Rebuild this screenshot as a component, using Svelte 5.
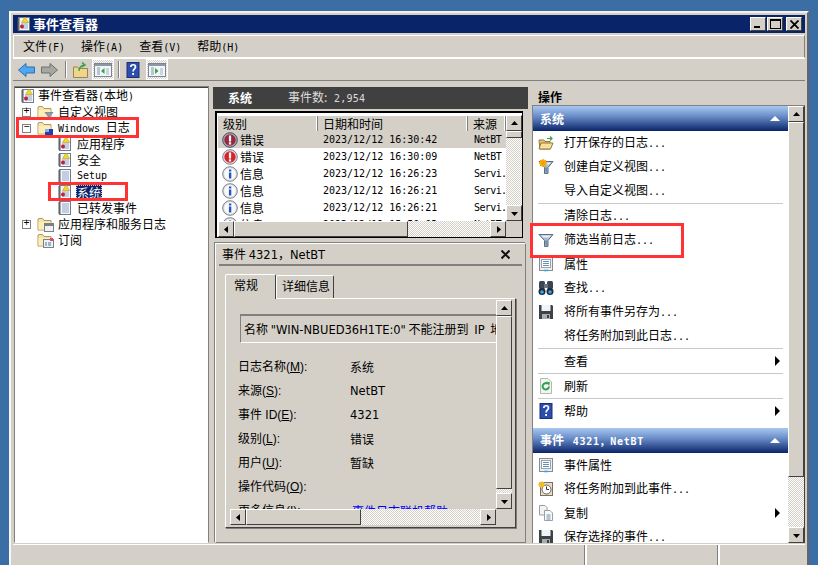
<script>
	const tree = [
		{ label: '应用程序', icon: 'log' },
		{ label: '安全', icon: 'log' },
		{ label: 'Setup', icon: 'plain', mono: true },
		{ label: '系统', icon: 'log', selected: true },
		{ label: '已转发事件', icon: 'plain' }
	];

	const events = [
		{ kind: 'error', level: '错误', time: '2023/12/12 16:30:42', source: 'NetBT', selected: true },
		{ kind: 'error', level: '错误', time: '2023/12/12 16:30:09', source: 'NetBT' },
		{ kind: 'info', level: '信息', time: '2023/12/12 16:26:23', source: 'Servi.' },
		{ kind: 'info', level: '信息', time: '2023/12/12 16:26:21', source: 'Servi.' },
		{ kind: 'info', level: '信息', time: '2023/12/12 16:26:21', source: 'Servi.' },
		{ kind: 'info', level: '信息', time: '2023/12/12 15:50:03', source: 'NetBT' }
	];

	const fields = [
		{ name: '日志名称', key: 'M', value: '系统' },
		{ name: '来源', key: 'S', value: 'NetBT', lat: true },
		{ name: '事件 ID', key: 'E', value: '4321', lat: true },
		{ name: '级别', key: 'L', value: '错误' },
		{ name: '用户', key: 'U', value: '暂缺' },
		{ name: '操作代码', key: 'O', value: '' },
		{ name: '更多信息', key: 'I', value: '事件日志联机帮助', link: true }
	];

	const systemActions = [
		{ label: '打开保存的日志', dots: true, icon: 'open' },
		{ label: '创建自定义视图', dots: true, icon: 'newfilter' },
		{ label: '导入自定义视图', dots: true },
		{ sep: true },
		{ label: '清除日志', dots: true },
		{ label: '筛选当前日志', dots: true, icon: 'filter' },
		{ label: '属性', icon: 'props' },
		{ label: '查找', dots: true, icon: 'find' },
		{ label: '将所有事件另存为', dots: true, icon: 'save' },
		{ label: '将任务附加到此日志', dots: true },
		{ sep: true },
		{ label: '查看', more: true },
		{ sep: true },
		{ label: '刷新', icon: 'refresh' },
		{ sep: true },
		{ label: '帮助', icon: 'help', more: true }
	];

	const eventActions = [
		{ label: '事件属性', icon: 'props' },
		{ label: '将任务附加到此事件', dots: true, icon: 'task' },
		{ label: '复制', icon: 'copy', more: true },
		{ label: '保存选择的事件', dots: true, icon: 'save' }
	];
</script>

{#snippet arrow(dir)}
	<svg class="arrow" width="7" height="7" viewBox="0 0 7 7">
		{#if dir === 'up'}<path d="M3.5 1 7 5H0z" />
		{:else if dir === 'down'}<path d="M0 2h7L3.5 6z" />
		{:else if dir === 'left'}<path d="M5 0v7L1 3.5z" />
		{:else}<path d="M2 0v7l4-3.5z" />{/if}
	</svg>
{/snippet}

{#snippet vbar(thumb)}
	<div class="vbar">
		<div class="sbtn">{@render arrow('up')}</div>
		<div class="thumb" style="flex: 0 0 {thumb}px"></div>
		<div class="track"></div>
		<div class="sbtn">{@render arrow('down')}</div>
	</div>
{/snippet}

{#snippet hbar(thumb)}
	<div class="hbar">
		<div class="sbtn">{@render arrow('left')}</div>
		<div class="thumb" style="flex: 0 0 {thumb}px"></div>
		<div class="track"></div>
		<div class="sbtn">{@render arrow('right')}</div>
	</div>
{/snippet}

{#snippet icon(name)}
	<svg class="ico" width="16" height="16" viewBox="0 0 16 16">
		{#if name === 'log'}
			<rect x="2.5" y="1.5" width="11" height="13" fill="#f4f7fb" stroke="#6d7b8e" />
			<path d="M5 8h7M5 10h7M5 12h7" stroke="#8fa6c4" />
			<path d="M1 3h3M1 5h3M1 7h3M1 9h3M1 11h3M1 13h3" stroke="#555" />
			<path d="M9 1l3.500 5.500h-7z" fill="#f7d828" stroke="#b89a10" stroke-width=".6" />
			<circle cx="6" cy="10.500" r="2" fill="#c4203a" />
		{:else if name === 'plain'}
			<rect x="2.5" y="1.500" width="11" height="13" fill="#f4f7fb" stroke="#6d7b8e" />
			<path d="M5 4h7M5 6h7M5 8h7M5 10h7M5 12h7" stroke="#8fa6c4" />
			<path d="M1 3h3M1 5h3M1 7h3M1 9h3M1 11h3M1 13h3" stroke="#555" />
		{:else if name === 'open'}
			<path d="M1 5h5l1 1.500h5V14H2z" fill="#e8c46c" stroke="#94783a" />
			<path d="M1 14l2-6h12l-2.500 6z" fill="#f6e0a0" stroke="#94783a" />
			<path d="M9 3.500h5M12 1.500l2 2-2 2" stroke="#3da14a" fill="none" stroke-width="1.200" />
		{:else if name === 'filter' || name === 'newfilter'}
			<path d="M1 2.500h14L10 8.500v6H6.500V8.500z" fill="#a9bdd2" stroke="#5d6b7c" />
			<path d="M6.500 8.500h3.500v6H8z" fill="#7890a8" />
			<path d="M3 3.500h10l-2 2H5z" fill="#e6eef6" />
			{#if name === 'newfilter'}
				<circle cx="5" cy="4" r="3.500" fill="#fbb615" />
				<path d="M5 0v8M1 4h8M2 1l6 6M8 1L2 7" stroke="#f39a05" />
			{/if}
		{:else if name === 'props'}
			<rect x="1.500" y="1.500" width="13" height="13" fill="#eceef0" stroke="#858c94" />
			<rect x="3.500" y="3.500" width="9" height="8" fill="#fff" stroke="#9aa2aa" />
			<path d="M5 5.500h6M5 7.500h6M5 9.500h6" stroke="#6a8fb4" />
			<path d="M6 14.500h4" stroke="#3aa0d8" stroke-width="1.500" />
		{:else if name === 'find'}
			<rect x="1" y="1" width="6" height="8" rx="1.500" fill="#3c4550" />
			<rect x="9" y="1" width="6" height="8" rx="1.500" fill="#3c4550" />
			<rect x="6" y="4" width="4" height="4" fill="#6c7682" />
			<circle cx="4" cy="11.500" r="3.500" fill="#1f2a36" />
			<circle cx="12" cy="11.500" r="3.500" fill="#1f2a36" />
			<circle cx="4" cy="12" r="1.800" fill="#38a8ee" />
			<circle cx="12" cy="12" r="1.800" fill="#38a8ee" />
		{:else if name === 'save'}
			<path d="M1 1h13l1 1v13H1z" fill="#3d4249" />
			<rect x="3.500" y="1" width="9" height="6" fill="#f2f3f5" />
			<rect x="4" y="10" width="8" height="5" fill="#a8adb3" />
			<rect x="9" y="11" width="2" height="3" fill="#3d4249" />
		{:else if name === 'refresh'}
			<path d="M2.500.5H10l3.500 3.500v11.500h-11z" fill="#f3f4f3" stroke="#b4b8b4" />
			<path d="M11 8.500a3.200 3.200 0 1 1-1.200-2.700" fill="none" stroke="#28a548" stroke-width="2" />
			<path d="M8.500 3.500l3.500 1-1 3.500z" fill="#28a548" />
		{:else if name === 'help'}
			<rect x="2" y="0.500" width="12" height="15" fill="#2a4fb0" stroke="#1b2f72" />
			<path d="M5.800 5c0-3 4.700-3 4.700 0 0 2-2.400 2-2.400 4.500" fill="none" stroke="#fff" stroke-width="1.700" />
			<rect x="7.200" y="11" width="1.800" height="2" fill="#fff" />
		{:else if name === 'task'}
			<rect x="2.500" y="1.500" width="12" height="13" fill="#e5dccb" stroke="#7d6f5b" />
			<circle cx="8.500" cy="8.500" r="4.500" fill="#fff" stroke="#6b6252" />
			<path d="M8.500 5.500v3h2.500" fill="none" stroke="#333" />
			<circle cx="3.500" cy="3.500" r="3" fill="#f7b92c" />
		{:else if name === 'copy'}
			<path d="M1.500.5H7l2 2V10H1.500z" fill="#f2f3f5" stroke="#9a9fa6" />
			<path d="M6.500 5.500H12l2.500 2.500v7.500h-8z" fill="#f8f9fa" stroke="#9a9fa6" />
			<path d="M8.500 10h4M8.500 12h4M8.500 14h4" stroke="#6a8fb4" />
		{/if}
	</svg>
{/snippet}

{#snippet folder(badge)}
	<svg class="ico" width="17" height="16" viewBox="0 0 17 16">
		<path d="M1 3V14h13V4.500H7L5.500 2.500H2z" fill="#f7e3a6" stroke="#b39a5e" />
		<path d="M1.500 6h12v7.500h-12z" fill="#fbeebb" />
		{#if badge === 'filter'}
			<path d="M8 8.500h8l-3 3.500v3h-2v-3z" fill="#8ea2b6" stroke="#5b6b7c" stroke-width=".6" />
		{:else if badge === 'windows'}
			<rect x="8" y="9" width="8" height="6.500" fill="#1e3fae" />
			<rect x="8" y="9" width="4" height="3" fill="#8ab0ef" />
		{:else if badge === 'app'}
			<rect x="7.500" y="7.500" width="9" height="8" fill="#f1f2f4" stroke="#7b8087" />
			<rect x="8" y="8" width="8" height="2" fill="#7b8087" />
		{:else if badge === 'sub'}
			<rect x="6.500" y="7.500" width="10" height="8" fill="#eef1f6" stroke="#7b8087" />
			<rect x="13" y="6" width="3" height="3" fill="#e8485a" />
			<path d="M8 11h2M11 11h3M8 13h2M11 13h3" stroke="#4a78b0" />
		{/if}
	</svg>
{/snippet}

{#snippet levelIcon(kind, dim)}
	<svg class="lvl" width="16" height="16" viewBox="0 0 16 16">
		<circle cx="8" cy="8" r="7.300" fill={dim ? '#a9abb8' : '#dfe1e6'} stroke={dim ? '#4a4e68' : '#7d8088'} />
		{#if kind === 'error'}
			<circle cx="8" cy="8" r="5.700" fill={dim ? '#98283f' : '#d9242c'} />
			<rect x="6.900" y="3.500" width="2.200" height="6" fill="#fff" />
			<rect x="6.900" y="10.300" width="2.200" height="2.200" fill="#fff" />
		{:else}
			<circle cx="8" cy="8" r="5.700" fill="#fbfbfd" />
			<rect x="6.900" y="6.500" width="2.400" height="6" fill="#2456b8" />
			<rect x="6.900" y="3.500" width="2.400" height="2" fill="#2456b8" />
		{/if}
	</svg>
{/snippet}

{#snippet toolIcon(mirror)}
	<svg width="18" height="16" viewBox="0 0 18 16">
		<rect x="0.500" y="1.500" width="17" height="13" fill="#f3f5f7" stroke="#7d858e" />
		<rect x="1" y="2" width="16" height="2" fill="#8d98a4" />
		<path d="M3 6h3M3 8h3M3 10h3M3 12h3" stroke="#7a96b8" />
		<rect x="12" y="6" width="3" height="7" fill="#c9d5e3" />
		{#if mirror}<path d="M7 6v6l3.500-3z" fill="#2ea84a" />{:else}<path d="M10.500 6v6L7 9z" fill="#2ea84a" />{/if}
	</svg>
{/snippet}

{#snippet actionList(items)}
	{#each items as item}
		{#if item.sep}
			<div class="act-sep"></div>
		{:else}
			<div class="act">
				<span class="act-ico">{#if item.icon}{@render icon(item.icon)}{/if}</span>
				<span class="act-label">{item.label}{#if item.dots}<span class="mono">...</span>{/if}</span>
				{#if item.more}<span class="more"></span>{/if}
			</div>
		{/if}
	{/each}
{/snippet}

<div class="desktop">
	<div class="window">
		<div class="titlebar">
			{@render icon('log')}
			<span class="title">事件查看器</span>
			<div class="caption">
				<button class="cap" aria-label="最小化"><i class="c-min"></i></button>
				<button class="cap" aria-label="最大化"><i class="c-max"></i></button>
				<button class="cap close" aria-label="关闭">
					<svg width="9" height="9" viewBox="0 0 9 9"><path d="M.5.500l8 8M8.500.500l-8 8" stroke="#000" stroke-width="1.800" /></svg>
				</button>
			</div>
		</div>

		<nav class="menubar">
			<span>文件<span class="mono">(F)</span></span>
			<span>操作<span class="mono">(A)</span></span>
			<span>查看<span class="mono">(V)</span></span>
			<span>帮助<span class="mono">(H)</span></span>
		</nav>

		<div class="toolbar">
			<svg width="17" height="14" viewBox="0 0 17 14"><path d="M.500 7 8 .500V4h8.500v6H8v3.500z" fill="#4fa8ee" stroke="#2b6fb8" /></svg>
			<svg class="tb-fwd" width="17" height="14" viewBox="0 0 17 14"><path d="M16.500 7 9 .500V4H.500v6H9v3.500z" fill="#a6a6a2" stroke="#6f6f6c" /></svg>
			<span class="tb-sep"></span>
			<svg class="tb-up" width="15" height="16" viewBox="0 0 15 16"><path d="M.500 5h4l1 1.500h9v9H.500z" fill="#f0d68a" stroke="#9a8450" /><path d="M6 9c0-4 2-5 5-6M9 .500l3 2.500-3 2" fill="none" stroke="#3aa548" stroke-width="1.500" /></svg>
			<span class="tb-toggle">{@render toolIcon(false)}</span>
			<span class="tb-sep second"></span>
			<span class="tb-help">{@render icon('help')}</span>
			<span class="tb-toggle">{@render toolIcon(true)}</span>
		</div>

		<div class="main">
			<aside class="tree">
				<div class="node root">{@render icon('log')}<span>事件查看器<span class="mono"> (</span>本地<span class="mono">)</span></span></div>
				<div class="node top"><b class="exp">+</b>{@render folder('filter')}<span>自定义视图</span></div>
				<div class="node top"><b class="exp">−</b>{@render folder('windows')}<span><span class="mono">Windows</span> <span class="wide">日志</span></span></div>
				{#each tree as t}
					<div class="node sub">
						{@render icon(t.icon)}
						<span class:sel={t.selected} class:mono={t.mono}>{t.label}</span>
					</div>
				{/each}
				<div class="node top"><b class="exp">+</b>{@render folder('app')}<span>应用程序和服务日志</span></div>
				<div class="node top noexp">{@render folder('sub')}<span>订阅</span></div>
			</aside>

			<section class="center">
				<header class="center-head"><strong>系统</strong><span>事件数: <span class="num">2,954</span></span></header>

				<div class="listbox">
					<div class="list-top">
						<div class="list-body">
							<div class="cols">
								<span class="c1">级别</span>
								<span class="c2">日期和时间</span>
								<span class="c3">来源</span>
							</div>
							<div class="rows">
								{#each events as e}
									<div class="row" class:picked={e.selected}>
										<span class="c1">{@render levelIcon(e.kind, e.selected)}{e.level}</span>
										<span class="c2 mono">{e.time}</span>
										<span class="c3 mono">{e.source}</span>
									</div>
								{/each}
							</div>
						</div>
						{@render vbar(7)}
					</div>
					<div class="list-bottom">
						{@render hbar(174)}
						<span class="corner"></span>
					</div>
				</div>

				<div class="detail">
					<div class="detail-head">
						<span>事件 <span class="lat">4321</span>，<span class="lat">NetBT</span></span>
						<svg width="9" height="9" viewBox="0 0 9 9"><path d="M.5.500l8 8M8.500.500l-8 8" stroke="#111" stroke-width="2" /></svg>
					</div>
					<div class="tabs">
						<span class="tab on">常规</span>
						<span class="tab">详细信息</span>
					</div>
					<div class="tab-panel">
						<div class="panel-top">
							<div class="panel-body">
								<div class="message">名称 <span class="lat">"WIN-NBUED36H1TE:0"</span> 不能注册到 <span class="lat ip">IP</span> 地址</div>
								{#each fields as f}
									<div class="field">
										<span class="f-name">{f.name}(<u>{f.key}</u>):</span>
										<span class:lat={f.lat} class:link={f.link}>{f.value}</span>
									</div>
								{/each}
							</div>
							{@render vbar(173)}
						</div>
						<div class="panel-bottom">
							{@render hbar(115)}
							<span class="corner"></span>
						</div>
					</div>
				</div>
			</section>

			<aside class="actions">
				<h2>操作</h2>
				<div class="actions-wrap">
					<div class="actions-body">
						<div class="band"><span>系统</span><i class="band-arrow"></i></div>
						<div>{@render actionList(systemActions)}</div>
						<div class="band second"><span>事件 <span class="band-mono">4321，NetBT</span></span><i class="band-arrow"></i></div>
						<div>{@render actionList(eventActions)}</div>
					</div>
					{@render vbar(355)}
				</div>
			</aside>
		</div>

		<footer class="status">
			<span></span>
			<span></span>
			<span></span>
		</footer>
	</div>

	<span class="mark m1"></span>
	<span class="mark m2"></span>
	<span class="mark m3"></span>
</div>

<style>
	:global(body) {
		margin: 0;
		overflow: hidden;
	}

	.desktop {
		position: relative;
		width: 818px;
		height: 565px;
		box-sizing: border-box;
		padding: 11px 0 0 9px;
		background: #3a6ea5;
		font: 12px/16px "Noto Sans CJK SC", "Liberation Sans", sans-serif;
		color: #000;
	}

	.mono {
		font-family: "DejaVu Sans Mono", "Noto Sans CJK SC", monospace;
		font-size: 10px;
		white-space: pre;
	}

	.lat {
		font-family: "DejaVu Sans", sans-serif;
		font-size: 11.5px;
	}

	.ip {
		margin: 0 3px;
	}

	.wide {
		margin-left: 3px;
	}

	.window {
		box-sizing: border-box;
		width: 800px;
		height: 554px;
		display: flex;
		flex-direction: column;
		padding: 2px 2px 0;
		background: #d4d0c8;
		border: 2px solid;
		border-color: #f2f1ee #666 #666 #f8f8f8;
		border-bottom: 0;
	}

	.titlebar {
		flex: 0 0 18px;
		display: flex;
		align-items: center;
		gap: 1px;
		padding: 0 3px;
		background: #0a246a;
		color: #fff;
	}

	.title {
		font-size: 13px;
		font-weight: 700;
	}

	.caption {
		margin-left: auto;
		display: flex;
		gap: 1px;
	}

	.cap {
		position: relative;
		width: 16px;
		height: 14px;
		padding: 0;
		display: flex;
		align-items: center;
		justify-content: center;
		background: #d4d0c8;
		border: 1px solid;
		border-color: #fff #404040 #404040 #fff;
	}

	.close {
		margin-left: 2px;
	}

	.c-min {
		position: absolute;
		left: 3px;
		bottom: 2px;
		width: 6px;
		height: 2px;
		background: #000;
	}

	.c-max {
		width: 9px;
		height: 7px;
		border: 1px solid #000;
		border-top-width: 2px;
	}

	.menubar {
		flex: 0 0 23px;
		box-sizing: border-box;
		margin-top: 2px;
		padding-left: 9px;
		display: flex;
		align-items: center;
		gap: 16px;
		border: 1px solid;
		border-color: #fff #808080 #fff #fff;
	}

	.toolbar {
		flex: 0 0 23px;
		box-sizing: border-box;
		display: flex;
		align-items: center;
		padding-left: 5px;
		border-top: 1px solid #fff;
		border-bottom: 1px solid #808080;
	}

	.tb-fwd {
		margin-left: 6px;
	}

	.tb-sep {
		width: 1px;
		height: 17px;
		margin: 0 6px 0 7px;
		background: #808080;
		border-right: 1px solid #fff;
	}

	.tb-sep.second {
		margin: 0 5px 0 4px;
	}

	.tb-up {
		margin-right: 4px;
	}

	.tb-help {
		display: flex;
		margin-right: 5px;
	}

	.tb-toggle {
		box-sizing: border-box;
		width: 22px;
		height: 21px;
		display: flex;
		align-items: center;
		justify-content: center;
		border: 1px solid #fff;
		background: conic-gradient(#fff 25%, #d4d0c8 0 50%, #fff 0 75%, #d4d0c8 0) 0 0 / 2px 2px;
	}

	.main {
		flex: 0 0 457px;
		margin: 5px 0 0 1px;
		display: grid;
		grid-template-columns: 195px 315px 274px;
		grid-template-rows: minmax(0, 1fr);
		gap: 0 4px;
		min-height: 0;
	}

	.tree {
		box-sizing: border-box;
		padding: 1px 0 0 5px;
		background: #fff;
		border: 1px solid;
		border-color: #808080 #808080 #fff #808080;
		box-shadow: inset 0 1px #404040;
		overflow: hidden;
	}

	.node {
		height: 16px;
		display: flex;
		align-items: center;
		white-space: nowrap;
	}

	.root {
		gap: 2px;
	}

	.top {
		padding-left: 2px;
		gap: 4px;
	}

	.top svg {
		margin-left: 2px;
	}

	.noexp {
		padding-left: 15px;
	}

	.exp {
		flex: 0 0 9px;
		box-sizing: border-box;
		height: 9px;
		border: 1px solid #808080;
		font: 400 10px/6px "Liberation Mono", monospace;
		text-align: center;
	}

	.sub {
		padding-left: 37px;
		gap: 4px;
	}

	.sel {
		margin-left: -1px;
		padding: 0 1px;
		background: #0a246a;
		color: #fff;
		outline: 1px dotted #c8c8c8;
		outline-offset: -1px;
		line-height: 15px;
	}

	.center {
		display: flex;
		flex-direction: column;
		min-width: 0;
		min-height: 0;
		padding-top: 1px;
	}

	.center-head {
		flex: 0 0 22px;
		display: flex;
		align-items: center;
		gap: 36px;
		padding-left: 15px;
		background: #404040;
		color: #fff;
	}

	.center-head span {
		color: #ddd;
	}

	.center-head .num {
		margin-left: 4px;
		font-family: "DejaVu Sans Mono", monospace;
		font-size: 10px;
		letter-spacing: 0.2px;
	}

	.listbox {
		flex: 0 0 127px;
		box-sizing: border-box;
		margin: 2px 5px 0 2px;
		display: flex;
		flex-direction: column;
		border: 2px solid #000;
		border-right-width: 1px;
		border-bottom-width: 1px;
		padding: 2px 0 0 1px;
		background: #fff;
		overflow: hidden;
	}

	.list-top {
		flex: 1;
		display: flex;
		min-height: 0;
	}

	.list-body {
		flex: 1;
		min-width: 0;
		overflow: hidden;
	}

	.cols {
		height: 15px;
		display: flex;
		background: #d4d0c8;
		line-height: 15px;
		border-top: 1px solid #fff;
	}

	.cols span {
		box-sizing: border-box;
		padding-left: 5px;
		border-right: 1px solid #808080;
		box-shadow: inset -1px 0 #fff;
	}

	.c1 {
		flex: 0 0 100px;
	}

	.c2 {
		flex: 0 0 150px;
	}

	.c3 {
		flex: 1;
		min-width: 0;
		white-space: nowrap;
	}

	.row {
		height: 17px;
		display: flex;
		align-items: center;
	}

	.row .c1 {
		display: flex;
		align-items: center;
		gap: 2px;
		padding-left: 4px;
		box-sizing: border-box;
	}

	.row .c2 {
		padding-left: 5px;
		box-sizing: border-box;
	}

	.row .c3 {
		padding-left: 6px;
		letter-spacing: -0.6px;
	}

	.picked {
		background: #d4d0c8;
	}

	.vbar {
		flex: 0 0 16px;
		width: 16px;
		display: flex;
		flex-direction: column;
		background: #d4d0c8;
	}

	.hbar {
		flex: 0 0 16px;
		display: flex;
		min-width: 0;
	}

	.list-bottom .hbar,
	.panel-bottom .hbar {
		flex: 1;
	}

	.sbtn,
	.thumb {
		box-sizing: border-box;
		background: #d4d0c8;
		border: 1px solid;
		border-color: #fff #404040 #404040 #fff;
	}

	.sbtn {
		flex: 0 0 16px;
		display: flex;
		align-items: center;
		justify-content: center;
	}

	.track {
		flex: 1;
		min-width: 0;
		min-height: 0;
		background: conic-gradient(#fff 25%, #d4d0c8 0 50%, #fff 0 75%, #d4d0c8 0) 0 0 / 2px 2px;
	}

	.arrow {
		fill: #000;
		display: block;
	}

	.list-bottom,
	.panel-bottom {
		display: flex;
		flex: 0 0 16px;
	}

	.corner {
		flex: 0 0 16px;
		background: #d4d0c8;
	}

	.detail {
		flex: 1;
		box-sizing: border-box;
		margin: 5px 2px 0;
		padding: 0 3px;
		display: flex;
		flex-direction: column;
		min-height: 0;
		border: 1px solid;
		border-color: #fff #808080 #808080 #fff;
		box-shadow: -1px -1px #808080;
	}

	.detail-head {
		flex: 0 0 22px;
		box-sizing: border-box;
		display: flex;
		align-items: center;
		justify-content: space-between;
		padding: 0 12px 0 3px;
		border-bottom: 2px solid #808080;
	}

	.tabs {
		flex: 0 0 32px;
		display: flex;
		align-items: flex-end;
		padding-left: 6px;
	}

	.tab {
		box-sizing: border-box;
		height: 23px;
		padding: 2px 3px 0 5px;
		border: 1px solid;
		border-color: #fff #404040 #fff #fff;
		border-bottom: 0;
		border-radius: 2px 2px 0 0;
	}

	.tab.on {
		position: relative;
		top: 1px;
		z-index: 1;
		height: 25px;
		padding: 2px 17px 0 8px;
		background: #d4d0c8;
	}

	.tab-panel {
		flex: 1;
		margin: 0 6px 14px;
		padding: 1px 3px 2px 4px;
		display: flex;
		flex-direction: column;
		min-height: 0;
		border: 1px solid;
		border-color: #fff #404040 #404040 #fff;
		box-shadow: 1px 1px #808080;
		overflow: hidden;
	}

	.panel-top {
		flex: 1;
		display: flex;
		min-height: 0;
	}

	.panel-body {
		flex: 1;
		min-width: 0;
		overflow: hidden;
		padding: 14px 0 0 8px;
	}

	.message {
		box-sizing: border-box;
		height: 29px;
		margin: 0 0 12px 2px;
		padding-left: 3px;
		line-height: 25px;
		white-space: nowrap;
		overflow: hidden;
		border: solid #808080;
		border-width: 2px 0 1px 1px;
		border-bottom-color: #fff;
	}

	.field {
		height: 24px;
		display: flex;
		align-items: center;
		white-space: nowrap;
	}

	.f-name {
		flex: 0 0 112px;
		font-family: "Liberation Sans", "Noto Sans CJK SC", sans-serif;
	}

	.f-name u {
		text-underline-offset: 1px;
	}

	.link {
		color: #0000ff;
		margin-left: 2px;
	}

	.actions {
		display: flex;
		flex-direction: column;
		min-height: 0;
		box-sizing: border-box;
		padding-top: 2px;
		margin-right: 1px;
	}

	.actions h2 {
		flex: 0 0 17px;
		margin: 0;
		padding-left: 6px;
		font-size: 12px;
		font-weight: 700;
		line-height: 17px;
		border-bottom: 1px solid #808080;
	}

	.actions-wrap {
		flex: 1;
		display: flex;
		min-height: 0;
		border-left: 1px solid #808080;
		border-right: 1px solid #404040;
		overflow: hidden;
		background: #fff;
	}

	.actions-body {
		flex: 1;
		min-width: 0;
		overflow: hidden;
	}

	.band {
		height: 25px;
		display: flex;
		align-items: center;
		justify-content: space-between;
		padding: 0 8px 0 7px;
		background: linear-gradient(#a8c8f0, #6c8fca 40%, #0a246a);
		color: #fff;
		font-weight: 700;
	}

	.band.second {
		margin-top: 5px;
	}

	.band-mono {
		margin-left: 6px;
		font-family: "DejaVu Sans Mono", "Noto Sans CJK SC", monospace;
		font-size: 10px;
		letter-spacing: 0.7px;
	}

	.band-arrow {
		width: 0;
		height: 0;
		border: 5px solid transparent;
		border-top: 0;
		border-bottom: 5px solid #fff;
	}

	.act {
		position: relative;
		height: 24px;
		display: flex;
		align-items: center;
	}

	.act-ico {
		flex: 0 0 31px;
		box-sizing: border-box;
		display: flex;
		padding-left: 5px;
	}

	.act-label {
		white-space: nowrap;
	}

	.more {
		position: absolute;
		right: 8px;
		top: 7px;
		border: 5px solid transparent;
		border-left: 5px solid #000;
		border-right: 0;
	}

	.act-sep {
		height: 1px;
		margin: 0 5px;
		background: #c8c8c8;
	}

	.status {
		flex: 1;
		display: grid;
		grid-template-columns: 574px 133px 1fr;
		margin-top: 1px;
		border-top: 1px solid #fff;
	}

	.status span {
		border-right: 2px solid #fff;
		box-shadow: inset -1px 0 #808080;
	}

	.status span:last-child {
		border-right: 0;
		box-shadow: none;
	}

	.mark {
		position: absolute;
		box-sizing: border-box;
		border: 3px solid #ff3333;
	}

	.m1 {
		left: 16px;
		top: 117px;
		width: 123px;
		height: 21px;
	}

	.m2 {
		left: 48px;
		top: 182px;
		width: 80px;
		height: 19px;
	}

	.m3 {
		left: 530px;
		top: 223px;
		width: 154px;
		height: 35px;
	}
</style>
